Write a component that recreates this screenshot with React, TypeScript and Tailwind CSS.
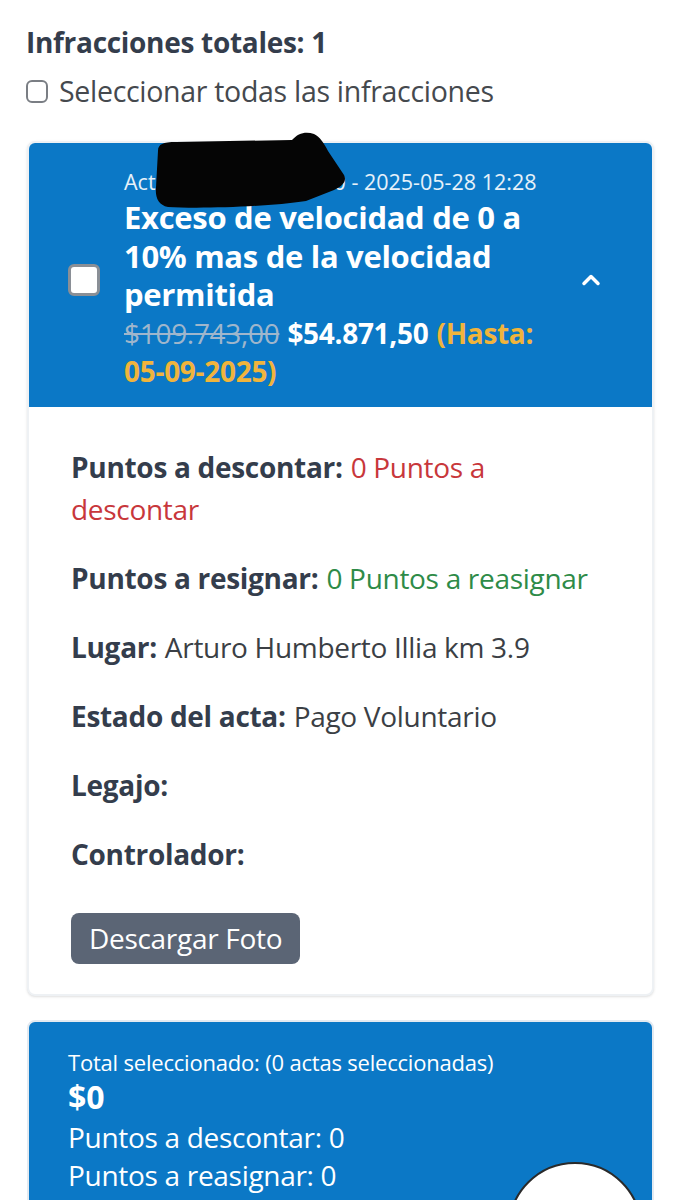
import { ChevronUp } from "lucide-react";

const font = { fontFamily: "'Open Sans', 'Noto Sans', sans-serif" };

interface DetailRowProps {
  label: string;
  value?: string;
  valueClass?: string;
}

function DetailRow({ label, value, valueClass = "text-[#3b3f45]" }: DetailRowProps) {
  return (
    <p className="text-[28px] leading-[42px] tracking-[-0.3px]">
      <span className="font-bold text-[#343d4c]">{label}</span>
      {value && <span className={`ml-2 ${valueClass}`}>{value}</span>}
    </p>
  );
}

function InfraccionCard() {
  return (
    <div className="mx-[27px] mt-[34px] rounded-lg border-2 border-[#eef1f4] bg-white shadow-sm">
      {/* Header */}
      <div className="relative flex items-center rounded-t-md bg-[#0b78c6] pl-[39px] pr-[47px] pt-[26px] pb-[16px]">
        {/* redaction mark */}
        <svg
          className="absolute left-[125px] top-[-12px]"
          width="196"
          height="80"
          viewBox="0 0 196 80"
        >
          <path
            d="M4 20 C4 13 9 11 22 11 L138 9 C144 2 152 0 160 3 C166 6 170 12 174 20 L190 44 C193 50 189 55 180 59 L152 70 C112 76 44 78 14 76 C4 74 1 66 2 56 Z"
            fill="#050505"
          />
        </svg>
        <div className="h-[32px] w-[32px] shrink-0 rounded-md border-[3px] border-[#8a8f96] bg-white" />
        <div className="ml-[24px] mr-[28px] flex-1">
          <div className="text-[21.5px] leading-[26px] text-white/90">
            Acta<span className="inline-block w-[166px]" />0 - 2025-05-28 12:28
          </div>
          <h2 className="mt-[3px] text-[31px] leading-[38.5px] font-bold tracking-[-0.3px] text-white">
            Exceso de velocidad de 0 a 10% mas de la velocidad permitida
          </h2>
          <p className="text-[28px] leading-[38.5px] font-bold tracking-[-0.3px]">
            <span className="mr-[8px] inline-block font-normal text-[#9fb6cc] line-through">$109.743,00</span>
            <span className="mr-[8px] inline-block text-white">$54.871,50</span>
            <span className="text-[#f0b43c]">(Hasta: 05-09-2025)</span>
          </p>
        </div>
        <ChevronUp className="h-7 w-7 shrink-0 text-white" strokeWidth={3} />
      </div>

      {/* Body */}
      <div className="flex flex-col gap-[27px] pl-[42px] pr-[58px] pt-[39px] pb-[30px]">
        <DetailRow label="Puntos a descontar:" value="0 Puntos a descontar" valueClass="text-[#c8373b]" />
        <DetailRow label="Puntos a resignar:" value="0 Puntos a reasignar" valueClass="text-[#2e8b48]" />
        <DetailRow label="Lugar:" value="Arturo Humberto Illia km 3.9" />
        <DetailRow label="Estado del acta:" value="Pago Voluntario" />
        <DetailRow label="Legajo:" />
        <DetailRow label="Controlador:" />
        <div className="pt-[11px]">
          <button className="rounded-lg bg-[#5b6575] px-[18px] py-[8px] text-[28px] leading-[35px] tracking-[-0.3px] text-white">
            Descargar Foto
          </button>
        </div>
      </div>
    </div>
  );
}

export default function App() {
  return (
    <div className="relative h-[1200px] overflow-hidden bg-white" style={font}>
      <div className="px-[26px] pt-[26px]">
        <h1 className="text-[28px] leading-[32px] font-bold tracking-[-0.3px] text-[#343d4c]">
          Infracciones totales: 1
        </h1>
        <label className="mt-[17px] flex items-center gap-[11px] text-[28.5px] leading-[32px] tracking-[-0.3px] text-[#45494e]">
          <span className="h-[23px] w-[22px] rounded-md border-2 border-[#7a7e84] bg-white" />
          Seleccionar todas las infracciones
        </label>
      </div>

      <InfraccionCard />

      {/* Summary */}
      <div className="mx-[27px] mt-[24px] rounded-lg border-2 border-[#e3eaf1] bg-[#0b78c6] px-[39px] pt-[26px] pb-[40px] text-white">
        <p className="text-[22px] leading-[28px] tracking-[-0.2px]">Total seleccionado: (0 actas seleccionadas)</p>
        <p className="mt-[3px] text-[32px] leading-[36px] font-bold">$0</p>
        <p className="mt-[3px] text-[28px] leading-[38px] tracking-[-0.3px]">Puntos a descontar: 0</p>
        <p className="text-[28px] leading-[38px] tracking-[-0.3px]">Puntos a reasignar: 0</p>
      </div>

      {/* floating button */}
      <div className="absolute left-[508px] top-[1162px] h-[134px] w-[134px] rounded-full border-2 border-[#2a2a2a] bg-white" />
    </div>
  );
}
